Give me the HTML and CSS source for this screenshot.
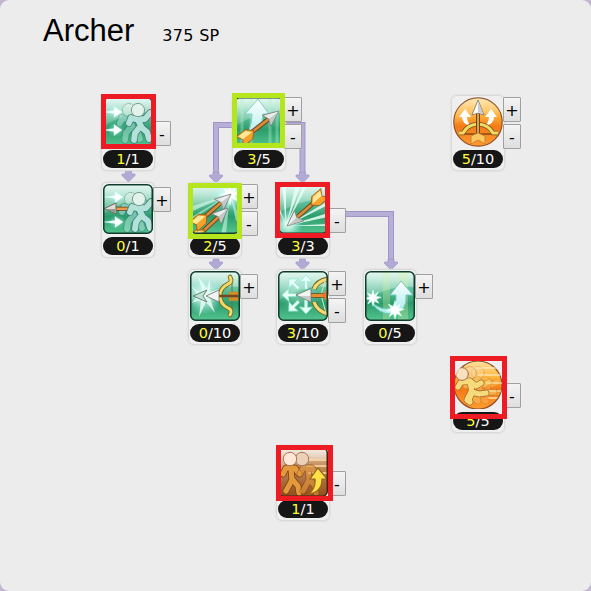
FILE: index.html
```
<!DOCTYPE html>
<html lang="en">
<head>
<meta charset="utf-8">
<title>Archer skills</title>
<link rel="stylesheet" href="styles.css">
</head>
<body>
<svg class="defs" width="0" height="0" aria-hidden="true">
  <defs>
    <linearGradient id="green" x2="0" y2="1"><stop offset="0" stop-color="#c4efe0"/><stop offset=".3" stop-color="#6cc8a6"/><stop offset=".65" stop-color="#2c9c6c"/><stop offset="1" stop-color="#55c590"/></linearGradient>
    <linearGradient id="gloss" x2="0" y2="1"><stop offset="0" stop-color="#fff" stop-opacity=".6"/><stop offset="1" stop-color="#fff" stop-opacity=".12"/></linearGradient>
    <linearGradient id="orange" x2="0" y2="1"><stop offset="0" stop-color="#ffe3a0"/><stop offset=".35" stop-color="#ffb43c"/><stop offset=".6" stop-color="#f47a17"/><stop offset="1" stop-color="#ff9d31"/></linearGradient>
    <linearGradient id="brown" x2="0" y2="1"><stop offset="0" stop-color="#ead7c2"/><stop offset=".4" stop-color="#c08a5a"/><stop offset="1" stop-color="#934d1c"/></linearGradient>
    <linearGradient id="ice" x2="0" y2="1"><stop offset="0" stop-color="#fff"/><stop offset="1" stop-color="#a4ecec"/></linearGradient>
    <linearGradient id="steel"><stop offset="0" stop-color="#dfe2e0"/><stop offset="1" stop-color="#fff"/></linearGradient>
    <radialGradient id="glow"><stop offset="0" stop-color="#fff"/><stop offset=".35" stop-color="#d8fff2" stop-opacity=".75"/><stop offset="1" stop-color="#aef" stop-opacity="0"/></radialGradient>
    <clipPath id="tile"><rect x=".5" y=".5" width="49" height="49" rx="5"/></clipPath>
    <clipPath id="disc"><circle cx="25" cy="25" r="24"/></clipPath>
    <g id="base"><rect width="50" height="50" fill="url(#green)"/><path d="M0 0H50V16Q25 13 0 30Z" fill="url(#gloss)"/></g>
    <rect id="edge" x=".75" y=".75" width="48.5" height="48.5" rx="5" fill="none" stroke="#103d2b" stroke-width="1.5"/>
    <path id="burst" d="M0-11 1.8-4 7-8 4.3-2.3 11-1 4.5 1.8 8 7 2 4.5 0 11-1.8 4.5-7 8-4.3 2.2-11 1-4.5-1.8-8-7-2-4.2Z" fill="#fff" stroke="#c7fff0" stroke-width=".7"/>
    <g id="dart"><ellipse cx="-5" rx="9" ry="7" fill="url(#glow)" opacity=".45"/><path d="M-18 0-7-1.5V-5.500L1 0-7 5.500V1.500Z" fill="#fff" stroke="#b6fff2" stroke-width=".5"/></g>
    <path id="limbs" d="M-7 8-1 9.500 7 9 12 3M-7 8-9 13M0 10 4 18M1 18-3 23-4 30M4 18 9 22 11 29"/>
    <g id="man" stroke-linecap="round" stroke-linejoin="round" fill="none">
      <use href="#limbs" stroke="#41807c" stroke-width="7.4"/><use href="#limbs" stroke="#b2e2da" stroke-width="5.8"/>
      <circle r="6.600" fill="#e3f3ec" stroke="#7c9c90"/>
    </g>
    <path id="sprint" d="M8 7-1 8-4 13M8 7 14 12 19 9M8 8 10 18 7 26M10 18 17 20 24 19M9 18 5 26 8 28"/>
    <g id="runner" stroke-linecap="round" stroke-linejoin="round" fill="none">
      <use href="#sprint" stroke="#a3662b" stroke-width="6.6"/><use href="#sprint" stroke="#f7da7c" stroke-width="5.3"/>
      <circle r="6.4" fill="#fae1bd" stroke="#a26a45"/>
    </g>
    <!-- arrow pointing right, tip at the origin -->
    <g id="arrow">
      <path d="M-12 0H-42" stroke="#68401b" stroke-width="4.6"/><path d="M-12 0H-42" stroke="#d88b38" stroke-width="2.8"/>
      <path d="M-50-6H-38L-32 0-38 6H-50L-46 0Z" fill="#f5a22c" stroke="#9a5a1c" stroke-width=".8"/><path d="M-48-5H-39L-34 0H-46Z" fill="#ffe795"/>
      <path d="M0 0-16-7-13 0-16 7Z" fill="url(#steel)" stroke="#77807b" stroke-width=".8"/><path d="M0 0-13 0-16 6Z" fill="#a7b1ac" opacity=".6"/>
    </g>

    <symbol id="i-rush" viewBox="0 0 50 50"><g clip-path="url(#tile)"><use href="#base"/><use href="#man" x="26" y="13" opacity=".5"/><use href="#dart" x="18" y="15"/><use href="#dart" x="18" y="33"/><use href="#man" x="35" y="13"/></g><use href="#edge"/></symbol>

    <symbol id="i-dash-shot" viewBox="0 0 50 50"><g clip-path="url(#tile)"><use href="#base"/><use href="#man" x="28" y="15" opacity=".55"/><use href="#dart" x="19" y="13"/><use href="#dart" x="19" y="38"/><path d="M12 24.7H30" stroke="#633d20" stroke-width="4"/><path d="M12 24.7H30" stroke="#ed9947" stroke-width="2.4"/><use href="#man" x="36" y="15"/><path d="M1.5 24.5 13 19V30Z" fill="#dedfda" stroke="#6b6961"/><path d="M3 25H12V29Z" fill="#96978f"/></g><use href="#edge"/></symbol>

    <symbol id="i-rise" viewBox="0 0 50 50"><g clip-path="url(#tile)"><use href="#base"/><path d="M8 0V50M17 0V50M36 0V50M43 0V50" stroke="#b8f2cc" stroke-width="3" opacity=".35"/><path d="M24 2 35 17H29Q29 36 7 44 18 35 18 17H11Z" fill="url(#ice)" stroke="#86cfc4"/><use href="#arrow" transform="translate(45 14) rotate(-38)"/></g><use href="#edge"/></symbol>

    <symbol id="i-twin" viewBox="0 0 50 50"><g clip-path="url(#tile)"><use href="#base"/><path d="M40 10 0 23V28ZM40 10 0 34V37ZM40 10 50 34 46 37ZM40 10 31 50H36Z" fill="#d9ffef" opacity=".55"/><circle cx="40" cy="10" r="17" fill="url(#glow)"/><use href="#burst" x="40" y="10"/><use href="#arrow" transform="translate(38 24) rotate(-43)"/><use href="#arrow" transform="translate(41 10) rotate(-41)"/></g><use href="#edge"/></symbol>

    <symbol id="i-pierce" viewBox="0 0 50 50"><g clip-path="url(#tile)"><use href="#base"/><path d="M8 42 4 0H8ZM8 42 18 0H23ZM8 42 26 0H30ZM8 42 50 17V21ZM8 42 50 29V33ZM8 42 50 40V42ZM8 42 0 20V25Z" fill="#e9fff7" opacity=".85"/><circle cx="10" cy="40" r="15" fill="url(#glow)"/><use href="#arrow" transform="translate(9 42) rotate(-41) scale(-1 1)"/></g><use href="#edge"/></symbol>

    <symbol id="i-bow" viewBox="0 0 50 50"><g clip-path="url(#tile)"><use href="#base"/><circle cx="14" cy="25" r="19" fill="url(#glow)"/><path d="M13 24 8 5 17 18 20 7 20 21 31 17 20 27 25 42 16 31 9 46 11 29 2 32 8 24 1 15Z" fill="#e8fff7" opacity=".8"/><path d="M42 8V43" stroke="#5e7840"/><path d="M39 22.500H50M39 28H50" stroke="#d48d27" stroke-width="3.500"/><g fill="none" stroke-linecap="round"><path id="limb" d="M40 6Q43 11 38 13 30 17 30 25 30 33 38 37 43 39 40 44" stroke="#6d601f" stroke-width="4.600"/><path d="M40 6Q43 11 38 13 30 17 30 25 30 33 38 37 43 39 40 44" stroke="#f3da67" stroke-width="3"/></g><path d="M28 25H48" stroke="#784720" stroke-width="2.4"/><path d="M3 25 17 19 13 25 17 31Z" fill="#bce4d3" stroke="#53685f" stroke-width=".8"/><path d="M16 25 29 19V31Z" fill="#f3f5f2" stroke="#69706b" stroke-width=".8"/></g><use href="#edge"/></symbol>

    <symbol id="i-spread" viewBox="0 0 50 50"><g clip-path="url(#tile)"><use href="#base"/><circle cx="20" cy="24" r="20" fill="url(#glow)" opacity=".3"/><path id="ray" d="M4 24 11 17.500 10.500 22.500H18V25.500H10.500L11 30.500Z" fill="#e6fff8" stroke="#8be6cd" stroke-width=".7"/><use href="#ray" transform="rotate(45 27 24)"/><use href="#ray" transform="rotate(-45 27 24)"/><use href="#ray" transform="translate(0 4) rotate(90 28 24)"/><use href="#ray" transform="translate(0 -5) rotate(-90 28 24)"/><g fill="none"><path d="M50 8Q39 10 36 18M36 31Q39 40 50 43" stroke="#6d601f" stroke-width="5"/><path d="M50 8Q39 10 36 18M36 31Q39 40 50 43" stroke="#f4d976" stroke-width="3.2"/><path d="M47 10 43 24 48 42" stroke="#d8e7b2"/></g><path d="M32 24.5H50" stroke="#70421f" stroke-width="4.4"/><path d="M32 24.5H50" stroke="#eb8c2f" stroke-width="2.8"/><path d="M44 24 49 19V31Z" fill="#e9782c"/><path d="M18 24 33 17.5V31Z" fill="#f3f5f2" stroke="#66716b" stroke-width=".8"/><path d="M19 25H33V31Z" fill="#a9b1ab" opacity=".6"/></g><use href="#edge"/></symbol>

    <symbol id="i-leap" viewBox="0 0 50 50"><g clip-path="url(#tile)"><use href="#base"/><path d="M18 0H25V50H18ZM33 0H43V50H33Z" fill="#d7f1a2" opacity=".3"/><path d="M36 10 48 24H41Q43 41 26 43 14 43 7 32 18 40 25 37 32 34 31 24H25Z" fill="url(#ice)" stroke="#76c8bd"/><use href="#burst" transform="translate(8 27) scale(.75)"/><use href="#burst" transform="translate(30 39) scale(.85)"/></g><use href="#edge"/></symbol>

    <symbol id="i-focus" viewBox="0 0 50 50"><circle cx="25" cy="25" r="24.2" fill="url(#orange)" stroke="#925126" stroke-width="1.2"/><g clip-path="url(#disc)"><path d="M0 0H50V17Q25 12 0 28Z" fill="url(#gloss)" opacity=".4"/><path id="lift" d="M12 12 18 20H14Q14 25 18 29 9 27 9 20H6Z" fill="#fff"/><use href="#lift" transform="translate(50 0) scale(-1 1)"/><path d="M8 37H42" stroke="#874817" stroke-width="1.5"/><path d="M6 36 10 36Q14 28 25 27 36 28 40 36L45 36" fill="none" stroke="#7a501a" stroke-width="4.600"/><path d="M6 36 10 36Q14 28 25 27 36 28 40 36L45 36" fill="none" stroke="#f1da64" stroke-width="3.2"/><path d="M25 16V42" stroke="#704619" stroke-width="4"/><path d="M25 16V42" stroke="#d8a448" stroke-width="2"/><path d="M18 39 25 36 32 39V47L25 43 18 47Z" fill="#f9c763" stroke="#c47a28" stroke-width=".8"/></g><path d="M25 3 31 18 25 16 19 18Z" fill="#fff" stroke="#74706c" stroke-width=".8"/><path d="M25 4 30 17 25 15Z" fill="#ccc"/></symbol>

    <symbol id="i-haste" viewBox="0 0 50 50"><circle cx="25" cy="26" r="24" fill="url(#orange)" stroke="#925126" stroke-width="1.2"/><g clip-path="url(#disc)"><path d="M20 9H50M25 16H50M33 24H50M33 32H50M35 39H50" stroke="#fff1c8" stroke-width="1.500" opacity=".8"/><use href="#runner" x="25" y="14" opacity=".25"/><use href="#runner" x="17" y="14" opacity=".4"/><use href="#runner" x="9" y="15"/></g></symbol>

    <symbol id="i-march" viewBox="0 0 50 50"><g clip-path="url(#tile)"><rect width="50" height="50" fill="url(#brown)"/><path d="M0 0H50V12Q25 12 0 24Z" fill="url(#gloss)"/><path d="M24 13H50M28 19H50M30 26H50" stroke="#ffdda3" stroke-width="2" opacity=".75"/><g id="walk" fill="none" stroke-linecap="round" stroke-linejoin="round"><path d="M5 27 8 21 17 21 21 27M13 22 14 33 8 44M14 32 20 39 21 46" stroke="#7d4317" stroke-width="6.800"/><path d="M5 27 8 21 17 21 21 27M13 22 14 33 8 44M14 32 20 39 21 46" stroke="#e49a3c" stroke-width="5.200"/></g><use href="#walk" x="17" opacity=".6"/><circle cx="24" cy="12" r="6.7" fill="#ecd1b8" stroke="#a57655"/><circle cx="12" cy="12" r="6.7" fill="#ffe9d6" stroke="#a57655"/><path d="M40 21 49 32H44Q44 45 31 47 38 41 37 32H32Z" fill="#ffe047" stroke="#98681b" stroke-width="1.2"/></g><rect x=".75" y=".75" width="48.5" height="48.5" rx="5" fill="none" stroke="#47230d" stroke-width="1.5"/></symbol>
    <path id="head" d="M-3-9H3V-6H6.5V-4.5L0 2-6.5-4.5V-6H-3Z"/>
  </defs>
</svg>

<main class="panel">
  <header class="heading"><h1>Archer</h1><span class="points">375 SP</span></header>
  <section class="tree">
    <svg class="links" width="404" height="425" viewBox="101 95 404 425" aria-hidden="true">
      <g fill="none" stroke="#a195c8" stroke-width="6"><path d="M235 125H216V176M285 125H302.500V176M340 214H391V263"/></g>
      <g fill="none" stroke="#b7afd7" stroke-width="4"><path d="M235 125H216V176M285 125H302.500V176M340 214H391V263"/></g>
      <g fill="#b3a9d5" stroke="#a59aca" stroke-width=".8"><use href="#head" x="128.500" y="180"/><use href="#head" x="216" y="181"/><use href="#head" x="302.500" y="181"/><use href="#head" x="216" y="268"/><use href="#head" x="302.500" y="268"/><use href="#head" x="391" y="268"/></g>
    </svg>

    <article class="skill rush"><svg class="icon"><use href="#i-rush"/></svg><p class="level"><b>1</b>/1</p><div class="controls lone"><button>-</button></div><i class="frame"></i></article>
    <article class="skill rise"><svg class="icon"><use href="#i-rise"/></svg><p class="level"><b>3</b>/5</p><div class="controls"><button>+</button><button>-</button></div><i class="frame lime"></i></article>
    <article class="skill focus"><svg class="icon"><use href="#i-focus"/></svg><p class="level"><b>5</b>/10</p><div class="controls"><button>+</button><button>-</button></div></article>
    <article class="skill dash"><svg class="icon"><use href="#i-dash-shot"/></svg><p class="level"><b>0</b>/1</p><div class="controls plus"><button>+</button></div></article>
    <article class="skill twin"><svg class="icon"><use href="#i-twin"/></svg><p class="level"><b>2</b>/5</p><div class="controls"><button>+</button><button>-</button></div><i class="frame lime"></i></article>
    <article class="skill pierce"><svg class="icon"><use href="#i-pierce"/></svg><p class="level"><b>3</b>/3</p><div class="controls lone"><button>-</button></div><i class="frame"></i></article>
    <article class="skill bow"><svg class="icon"><use href="#i-bow"/></svg><p class="level"><b>0</b>/10</p><div class="controls plus"><button>+</button></div></article>
    <article class="skill spread"><svg class="icon"><use href="#i-spread"/></svg><p class="level"><b>3</b>/10</p><div class="controls"><button>+</button><button>-</button></div></article>
    <article class="skill leap"><svg class="icon"><use href="#i-leap"/></svg><p class="level"><b>0</b>/5</p><div class="controls plus"><button>+</button></div></article>
    <article class="skill haste"><svg class="icon"><use href="#i-haste"/></svg><p class="level"><b>5</b>/5</p><div class="controls lone"><button>-</button></div><i class="frame"></i></article>
    <article class="skill march"><svg class="icon"><use href="#i-march"/></svg><p class="level"><b>1</b>/1</p><div class="controls lone"><button>-</button></div><i class="frame"></i></article>
  </section>
</main>
</body>
</html>
```
FILE: styles.css
```
* { box-sizing: border-box; }
body { margin: 0; background: #c3b4cf; }
.defs { position: absolute; }
.panel {
  height: 591px;
  overflow: hidden;
  border-radius: 9px;
  background: #ececec;
  color: #000;
}
.heading {
  display: flex;
  align-items: baseline;
  gap: 28px;
  height: 95px;
  padding: 13px 0 0 43px;
}
.heading h1 {
  margin: 0;
  font: 31px/35px "Liberation Sans", Arial, sans-serif;
}
.points {
  font: 16px/20px "DejaVu Sans", Verdana, sans-serif;
  letter-spacing: .3px;
}
.tree {
  position: relative;
  display: grid;
  grid-template-columns: 87px 44px 44px 87px 88px 54px;
  grid-template-rows: 87px 87px 88px 88px 76px;
  margin-left: 101px;
  width: 404px;
}
.links { position: absolute; left: 0; top: 0; }
.skill {
  position: relative;
  width: 54px;
  height: 76px;
  padding: 2px;
  border-radius: 6px;
  background: #efefef;
  box-shadow: inset 0 0 0 1px #dadada, 0 0 2px #cfcfcf;
}
.rush { grid-area: 1 / 1; }
.rise { grid-area: 1 / 3; }
.focus { grid-area: 1 / 6; }
.dash { grid-area: 2 / 1; }
.twin { grid-area: 2 / 2; }
.pierce { grid-area: 2 / 4; }
.bow { grid-area: 3 / 2; }
.spread { grid-area: 3 / 4; }
.leap { grid-area: 3 / 5; }
.haste { grid-area: 4 / 6; }
.march { grid-area: 5 / 4; }
.icon { display: block; width: 50px; height: 50px; }
.level {
  width: 50px;
  height: 18px;
  margin: 3px 0 0;
  border-radius: 9px;
  background: #161616;
  color: #fff;
  font: 14.5px/18px "DejaVu Sans", Verdana, sans-serif;
  text-align: center;
}
.level b { color: #ff3; font-weight: normal; }
.controls {
  position: absolute;
  left: 52px;
  top: 2px;
  display: grid;
  gap: 2px;
}
.controls.lone { top: 26px; }
.controls.plus { top: 5px; }
.controls button {
  width: 18px;
  height: 25px;
  padding: 2px 0 0;
  border: 1px solid #a0a0a0;
  border-radius: 1px;
  background: linear-gradient(#f4f4f4, #dedede);
  color: #000;
  font: 16px/21px "DejaVu Sans", Verdana, sans-serif;
}
.frame {
  position: absolute;
  left: 0;
  top: -1px;
  width: 55px;
  height: 55px;
  border: 5px solid #ed1c24;
}
.frame.lime { border-color: #b5e61d; }
.rise .frame { top: -2px; width: 53px; }
.twin .frame { top: 1px; width: 54px; height: 56px; }
.pierce .frame { left: -1px; top: 0; height: 56px; }
.haste .frame { left: -1px; width: 57px; height: 63px; }
.march .frame { top: 0; width: 57px; height: 56px; }
```
